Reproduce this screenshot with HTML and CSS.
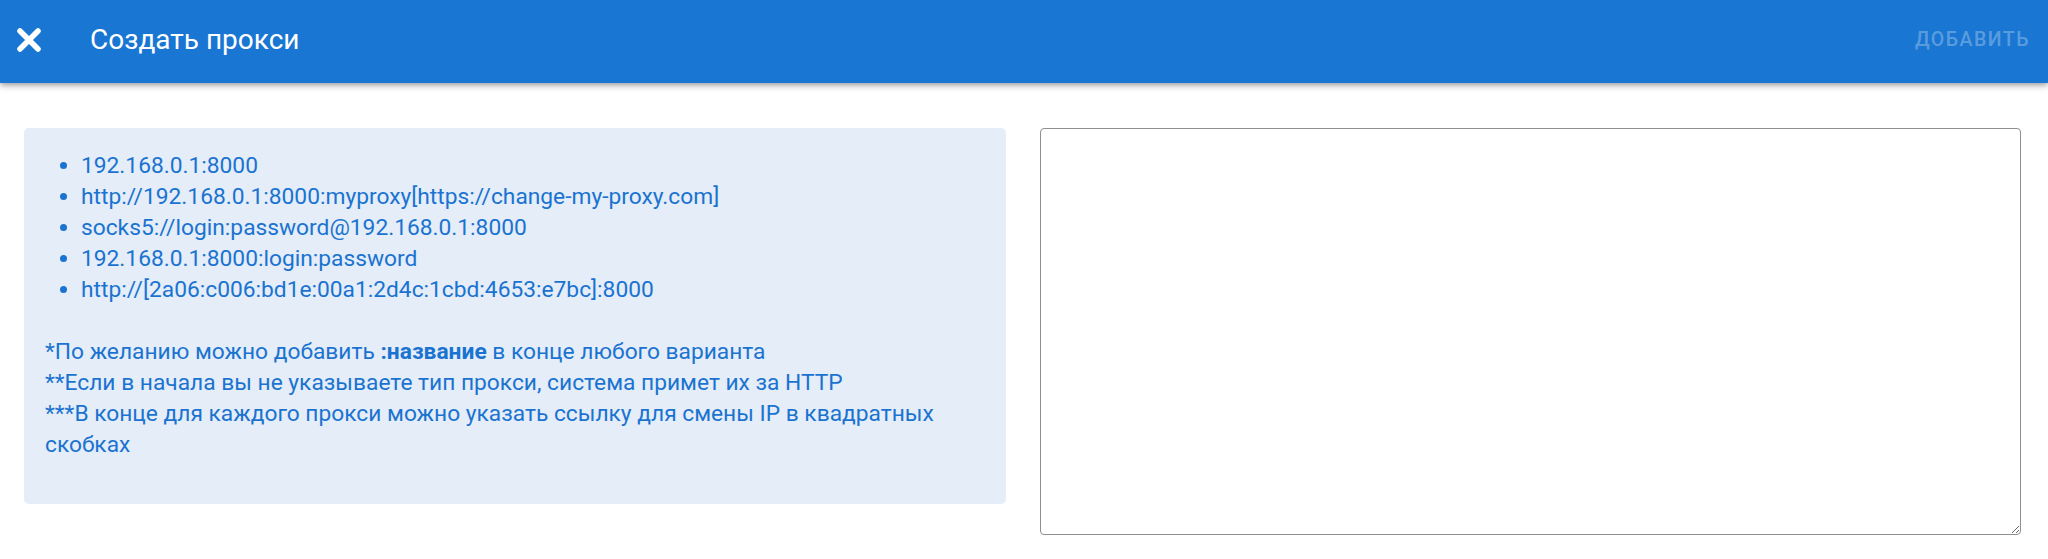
FILE: index.html
```html
<!DOCTYPE html>
<html lang="ru">
<head>
  <meta charset="UTF-8">
  <meta name="viewport" content="width=device-width, initial-scale=1.0">
  <title>Создать прокси</title>
  <link rel="stylesheet" href="styles.css">
</head>
<body>
  <header class="app-bar">
    <button class="close-btn" aria-label="Закрыть">
      <svg width="26" height="26" viewBox="0 0 26 26">
        <path d="M4 4 L22 22 M22 4 L4 22" stroke="#fff" stroke-width="5.5" stroke-linecap="round" fill="none"/>
      </svg>
    </button>
    <h1 class="app-title">Создать прокси</h1>
    <button class="add-btn" disabled>Добавить</button>
  </header>

  <main class="content">
    <div class="hint">
      <ul class="formats">
        <li>192.168.0.1:8000</li>
        <li>http://192.168.0.1:8000:myproxy[https://change-my-proxy.com]</li>
        <li>socks5://login:password@192.168.0.1:8000</li>
        <li>192.168.0.1:8000:login:password</li>
        <li>http://[2a06:c006:bd1e:00a1:2d4c:1cbd:4653:e7bc]:8000</li>
      </ul>
      <p class="notes">
        *По желанию можно добавить <b>:название</b> в конце любого варианта<br>
        **Если в начала вы не указываете тип прокси, система примет их за HTTP<br>
        ***В конце для каждого прокси можно указать ссылку для смены IP в квадратных скобках
      </p>
    </div>
    <textarea class="proxy-input"></textarea>
  </main>
</body>
</html>
```

FILE: styles.css
```css
body {
  margin: 0;
  font-family: Roboto, "Liberation Sans", sans-serif;
  background: #fff;
}

.app-bar {
  height: 83px;
  background-color: #1976d2;
  color: #fff;
  display: flex;
  align-items: center;
  padding: 0 10px 4px 10px;
  box-sizing: border-box;
  box-shadow: 0 2px 4px -1px rgba(0, 0, 0, 0.2), 0 4px 5px 0 rgba(0, 0, 0, 0.14), 0 1px 10px 0 rgba(0, 0, 0, 0.12);
  position: relative;
}

.close-btn {
  background: none;
  border: none;
  padding: 6px;
  display: flex;
  cursor: pointer;
}

.app-title {
  margin: 0 0 0 42px;
  font-size: 28px;
  font-weight: 400;
  flex: 1;
}

.add-btn {
  background: none;
  border: none;
  padding: 8px;
  font-family: inherit;
  font-size: 19.5px;
  font-weight: 500;
  letter-spacing: 1.5px;
  text-transform: uppercase;
  color: rgba(255, 255, 255, 0.3);
}

.content {
  display: grid;
  grid-template-columns: minmax(0, 1fr) minmax(0, 1fr);
  align-items: start;
  gap: 34px;
  padding: 45px 27px 0 24px;
}

.hint {
  background-color: #e4edf8;
  border-radius: 5px;
  padding: 22px 21px 21px;
  color: #1a73d0;
  font-size: 22.75px;
  line-height: 31px;
}

.formats {
  margin: 0 0 31px;
  padding-left: 36px;
}

.notes {
  margin: 0 0 23px;
}

.proxy-input {
  width: 100%;
  height: 407px;
  box-sizing: border-box;
  border: 1px solid #8f8f8f;
  border-radius: 4px;
  font-family: inherit;
  font-size: 22px;
}
```
